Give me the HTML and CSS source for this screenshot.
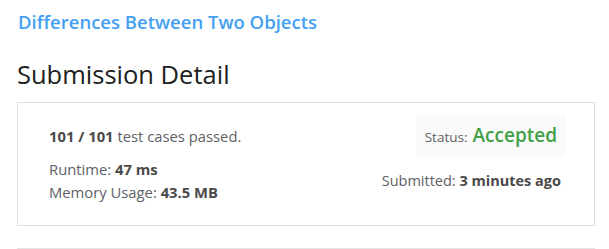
FILE: index.html
```html
<!DOCTYPE html>
<html>
<head>
<meta charset="utf-8">
<link rel="stylesheet" href="styles.css">
</head>
<body>
<div class="page">
  <a class="problem-title">Differences Between Two Objects</a>
  <h2 class="detail-title">Submission Detail</h2>
  <div class="card">
    <div class="row top-row">
      <div class="passed"><b>101 / 101</b> test cases passed.</div>
      <div class="status-box"><span class="status-label">Status:</span> <span class="accepted">Accepted</span></div>
    </div>
    <div class="row bottom-row">
      <div class="stats">
        <div>Runtime: <b>47 ms</b></div>
        <div>Memory Usage: <b>43.5 MB</b></div>
      </div>
      <div class="submitted">Submitted: <b>3 minutes ago</b></div>
    </div>
  </div>
  <div class="next-section"></div>
</div>
</body>
</html>
```
FILE: styles.css
```css
* { box-sizing: border-box; }
html, body { margin: 0; padding: 0; background: #fff; }
body {
  font-family: "Open Sans", "Noto Sans", sans-serif;
  color: #5e6166;
}
.page { padding: 10px 14px 0 17px; }
.problem-title {
  display: block;
  font-size: 18.5px;
  font-weight: 600;
  color: #44a0f2;
  line-height: 24px;
  margin-left: 1px;
}
.detail-title {
  margin: 25px 0 0 0;
  font-size: 25.5px;
  font-weight: 500;
  color: #212121;
  line-height: 30px;
}
.card {
  margin-top: 13px;
  border: 1px solid #dedede;
  padding: 12px 28px 21px 30px;
  font-size: 14.8px;
}
.row { display: flex; justify-content: space-between; align-items: flex-start; }
b { font-weight: 700; color: #4a4a4a; }
.passed { margin-top: 11px; line-height: 20px; margin-left: 1px; }
.status-box {
  background: #fafafa;
  height: 41px;
  padding: 0 9px;
  display: flex;
  align-items: baseline;
  gap: 5px;
  line-height: 41px;
}
.status-label { font-size: 13.5px; }
.accepted { color: #43a047; font-size: 19px; font-weight: 600; }
.bottom-row { margin-top: 2px; }
.stats { margin-left: 1px; }
.stats div { line-height: 23px; }
.submitted { margin-top: 11px; margin-right: 5px; font-size: 14.5px; line-height: 23px; }
.next-section {
  margin-top: 22px;
  border-top: 1px solid #e5e5e5;
  height: 10px;
}
```
